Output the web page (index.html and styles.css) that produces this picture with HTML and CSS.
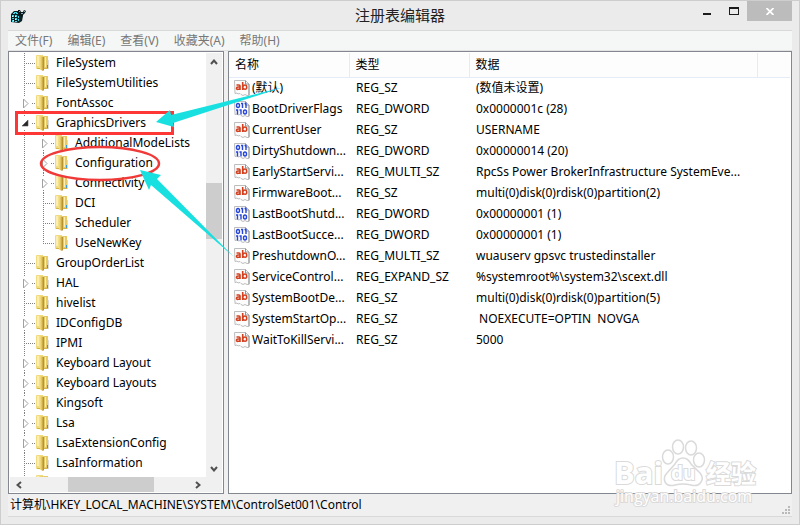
FILE: index.html
```html
<!DOCTYPE html>
<html lang="zh-CN">
<head>
<meta charset="utf-8">
<title>注册表编辑器</title>
<link rel="stylesheet" href="styles.css">
</head>
<body>
<svg class="defs" aria-hidden="true">
  <defs>
    <linearGradient id="gold" x1="0" x2="1" y1="0" y2="0">
      <stop offset="0" stop-color="#f6e48f"/><stop offset=".4" stop-color="#ecd373"/><stop offset=".9" stop-color="#b8922e"/><stop offset="1" stop-color="#ecd27a"/>
    </linearGradient>
    <symbol id="folder" viewBox="0 0 14 16">
      <path d="M0 1q0-1 1-1h6v14H1q-1 0-1-1z" fill="#f1db80"/>
      <path d="M7 2q0-1 1-1h4v13H7z" fill="#e6ca68"/>
      <path d="M3 1l5 1v13l-1 1-4-2z" fill="url(#gold)"/>
      <path d="M1 1h2v10H1zM9 2h1v10H9z" fill="#fbeeb0"/>
      <path d="M1 13h3v1H1zM8 13h4v1H8z" fill="#d7b548"/>
      <path d="M12 5h1v9h-1z" fill="#d9dcda"/>
      <path d="M11 10h1v3h-1z" fill="#3997dc"/>
    </symbol>
    <symbol id="leaf" viewBox="0 0 19 20">
      <path d="M7.500 0V20M9 10.500H19" class="dots"/>
    </symbol>
    <symbol id="last" viewBox="0 0 19 20">
      <path d="M7.500 0V10M7 10.500H19" class="dots"/>
    </symbol>
    <symbol id="closed" viewBox="0 0 19 20">
      <path d="M7.500 0V3M7.500 17V20M15 10.500H19" class="dots"/>
      <path d="M6.500 6v9l4.500-4.500z" fill="#fff" stroke="#a0a0a0"/>
    </symbol>
    <symbol id="open" viewBox="0 0 19 20">
      <path d="M7.500 0V3M7.500 17V20M15 10.500H19" class="dots"/>
      <path d="M11 7v6H5z" fill="#262626" stroke="#555" stroke-width=".6"/>
    </symbol>
    <symbol id="page" viewBox="0 0 16 16">
      <path d="M.5 .5h11l3.500 3.500v11.500h-2l-2-1-2 1-2-1-1-1-2 .5-1-1-2 .5z" fill="#fcfcfc" stroke="#bdbdbd"/>
      <path d="M11.500 .5v3.500H15v11" fill="none" stroke="#959595"/>
    </symbol>
    <symbol id="str" viewBox="0 0 16 16">
      <use href="#page" width="16" height="16"/>
      <g fill="none" stroke="#d2401f" stroke-width="1.600"><path d="M2.500 5h2.500q1 0 1 1v4M6 7H4Q2.500 7 2.500 8.300T4 9.300q2 0 2-1.300M8.700 2v8M9 6.500q.5-1.500 2-1.500 1.700 0 1.700 2.200T11 9.300q-1.500 0-2-1.300"/></g>
    </symbol>
    <symbol id="bin" viewBox="0 0 16 16">
      <use href="#page" width="16" height="16"/>
      <g fill="none" stroke="#2546d8" stroke-width="1.400"><ellipse cx="4" cy="4.500" rx="1.500" ry="2"/><path d="M7 2.500h1.500v4.500M10.500 2.500H12v4.500M2 9h1.500v4.500M5.500 9H7v4.500"/><ellipse cx="11" cy="11" rx="1.500" ry="2"/></g>
    </symbol>
  </defs>
</svg>

<div class="window">
  <header class="titlebar">
    <svg class="appicon" viewBox="0 0 16 16" aria-hidden="true">
      <path d="M1 6l3-3h4v2h5v3l-1 5-3 2-8-1V6z" fill="#0b2024"/>
      <path d="M2 7h2v2H2zM5 7h2v2H5zM8 8h1v2H8zM2 10h2v1H2zM5 10h2v2H5zM8 11h1v2H8zM2 12h2v2H2zM5 13h2v1H5zM4 4h3v1H4zM3 5h2v1H3zM6 5h2v1H6z" fill="#45d3e2"/>
      <path d="M2 8h1v1H2zM5 11h1v1H5zM5 8h1v1H5zM3 12h1v1H3z" fill="#d7ffff"/>
      <path d="M8 2l2 0 1 2 2 0 1-2 2 1-1 2-2 2-2 2-1-2-2-1z" fill="#0a1618"/>
      <path d="M9 3h1v1H9zM14 3h1v1h-1zM11 5h2v1h-2z" fill="#7ba9ae"/>
    </svg>
    <h1>注册表编辑器</h1>
    <div class="controls">
      <button aria-label="最小化"><svg width="8" height="2"><path d="M0 0h8v2H0z" fill="#1c1c1c"/></svg></button>
      <button aria-label="最大化"><svg width="10" height="8"><path d="M0 0h10v8H0zM1 2v5h8V2z" fill="#1c1c1c" fill-rule="evenodd"/></svg></button>
      <button class="close" aria-label="关闭"><svg width="8" height="7"><path d="M.5 0l7 7M7.500 0l-7 7" stroke="#fff" stroke-width="1.700"/></svg></button>
    </div>
  </header>

  <div class="client">
    <nav class="menubar">
      <button>文件(F)</button><button>编辑(E)</button><button>查看(V)</button><button>收藏夹(A)</button><button>帮助(H)</button>
    </nav>

    <main class="panes">
      <section class="tree" aria-label="注册表项">
        <div class="treeview">
          <ul>
            <li><div class="node"><svg class="gutter"><use href="#leaf"/></svg><svg class="folder"><use href="#folder"/></svg><span>FileSystem</span></div></li>
            <li><div class="node"><svg class="gutter"><use href="#leaf"/></svg><svg class="folder"><use href="#folder"/></svg><span>FileSystemUtilities</span></div></li>
            <li><div class="node"><button aria-label="展开"><svg class="gutter"><use href="#closed"/></svg></button><svg class="folder"><use href="#folder"/></svg><span>FontAssoc</span></div></li>
            <li><div class="node"><button aria-label="折叠"><svg class="gutter"><use href="#open"/></svg></button><svg class="folder"><use href="#folder"/></svg><span>GraphicsDrivers</span></div>
              <ul class="children">
                <li><div class="node"><button aria-label="展开"><svg class="gutter"><use href="#closed"/></svg></button><svg class="folder"><use href="#folder"/></svg><span>AdditionalModeLists</span></div></li>
                <li><div class="node"><button aria-label="展开"><svg class="gutter"><use href="#closed"/></svg></button><svg class="folder"><use href="#folder"/></svg><span>Configuration</span></div></li>
                <li><div class="node"><button aria-label="展开"><svg class="gutter"><use href="#closed"/></svg></button><svg class="folder"><use href="#folder"/></svg><span>Connectivity</span></div></li>
                <li><div class="node"><svg class="gutter"><use href="#leaf"/></svg><svg class="folder"><use href="#folder"/></svg><span>DCI</span></div></li>
                <li><div class="node"><svg class="gutter"><use href="#leaf"/></svg><svg class="folder"><use href="#folder"/></svg><span>Scheduler</span></div></li>
                <li><div class="node"><svg class="gutter"><use href="#last"/></svg><svg class="folder"><use href="#folder"/></svg><span>UseNewKey</span></div></li>
              </ul>
            </li>
            <li><div class="node"><svg class="gutter"><use href="#leaf"/></svg><svg class="folder"><use href="#folder"/></svg><span>GroupOrderList</span></div></li>
            <li><div class="node"><button aria-label="展开"><svg class="gutter"><use href="#closed"/></svg></button><svg class="folder"><use href="#folder"/></svg><span>HAL</span></div></li>
            <li><div class="node"><svg class="gutter"><use href="#leaf"/></svg><svg class="folder"><use href="#folder"/></svg><span>hivelist</span></div></li>
            <li><div class="node"><button aria-label="展开"><svg class="gutter"><use href="#closed"/></svg></button><svg class="folder"><use href="#folder"/></svg><span>IDConfigDB</span></div></li>
            <li><div class="node"><svg class="gutter"><use href="#leaf"/></svg><svg class="folder"><use href="#folder"/></svg><span>IPMI</span></div></li>
            <li><div class="node"><button aria-label="展开"><svg class="gutter"><use href="#closed"/></svg></button><svg class="folder"><use href="#folder"/></svg><span>Keyboard Layout</span></div></li>
            <li><div class="node"><button aria-label="展开"><svg class="gutter"><use href="#closed"/></svg></button><svg class="folder"><use href="#folder"/></svg><span>Keyboard Layouts</span></div></li>
            <li><div class="node"><button aria-label="展开"><svg class="gutter"><use href="#closed"/></svg></button><svg class="folder"><use href="#folder"/></svg><span>Kingsoft</span></div></li>
            <li><div class="node"><button aria-label="展开"><svg class="gutter"><use href="#closed"/></svg></button><svg class="folder"><use href="#folder"/></svg><span>Lsa</span></div></li>
            <li><div class="node"><button aria-label="展开"><svg class="gutter"><use href="#closed"/></svg></button><svg class="folder"><use href="#folder"/></svg><span>LsaExtensionConfig</span></div></li>
            <li><div class="node"><svg class="gutter"><use href="#leaf"/></svg><svg class="folder"><use href="#folder"/></svg><span>LsaInformation</span></div></li>
            <li><div class="node"><svg class="gutter"><use href="#leaf"/></svg><svg class="folder"><use href="#folder"/></svg></div></li>
          </ul>
        </div>
        <div class="vscroll">
          <button aria-label="向上滚动"><svg width="8" height="6"><path d="M1 5l3-3.500L7 5" class="chev"/></svg></button>
          <div class="track"><div class="thumb"></div></div>
          <button aria-label="向下滚动"><svg width="8" height="6"><path d="M1 1l3 3.500L7 1" class="chev"/></svg></button>
        </div>
        <div class="hscroll">
          <button aria-label="向左滚动"><svg width="6" height="8"><path d="M5 1L1.500 4 5 7" class="chev"/></svg></button>
          <div class="track"><div class="thumb"></div></div>
          <button aria-label="向右滚动"><svg width="6" height="8"><path d="M1 1l3.500 3L1 7" class="chev"/></svg></button>
        </div>
      </section>

      <section class="list" aria-label="值">
        <table>
          <colgroup><col class="c-name"><col class="c-type"><col class="c-data"><col></colgroup>
          <thead><tr><th>名称</th><th>类型</th><th>数据</th><th></th></tr></thead>
          <tbody>
            <tr><td><svg class="val"><use href="#str"/></svg>(默认)</td><td>REG_SZ</td><td>(数值未设置)</td><td></td></tr>
            <tr><td><svg class="val"><use href="#bin"/></svg>BootDriverFlags</td><td>REG_DWORD</td><td>0x0000001c (28)</td><td></td></tr>
            <tr><td><svg class="val"><use href="#str"/></svg>CurrentUser</td><td>REG_SZ</td><td>USERNAME</td><td></td></tr>
            <tr><td><svg class="val"><use href="#bin"/></svg>DirtyShutdown...</td><td>REG_DWORD</td><td>0x00000014 (20)</td><td></td></tr>
            <tr><td><svg class="val"><use href="#str"/></svg>EarlyStartServi...</td><td>REG_MULTI_SZ</td><td>RpcSs Power BrokerInfrastructure SystemEve...</td><td></td></tr>
            <tr><td><svg class="val"><use href="#str"/></svg>FirmwareBoot...</td><td>REG_SZ</td><td>multi(0)disk(0)rdisk(0)partition(2)</td><td></td></tr>
            <tr><td><svg class="val"><use href="#bin"/></svg>LastBootShutd...</td><td>REG_DWORD</td><td>0x00000001 (1)</td><td></td></tr>
            <tr><td><svg class="val"><use href="#bin"/></svg>LastBootSucce...</td><td>REG_DWORD</td><td>0x00000001 (1)</td><td></td></tr>
            <tr><td><svg class="val"><use href="#str"/></svg>PreshutdownO...</td><td>REG_MULTI_SZ</td><td>wuauserv gpsvc trustedinstaller</td><td></td></tr>
            <tr><td><svg class="val"><use href="#str"/></svg>ServiceControl...</td><td>REG_EXPAND_SZ</td><td>%systemroot%\system32\scext.dll</td><td></td></tr>
            <tr><td><svg class="val"><use href="#str"/></svg>SystemBootDe...</td><td>REG_SZ</td><td>multi(0)disk(0)rdisk(0)partition(5)</td><td></td></tr>
            <tr><td><svg class="val"><use href="#str"/></svg>SystemStartOp...</td><td>REG_SZ</td><td> NOEXECUTE=OPTIN  NOVGA</td><td></td></tr>
            <tr><td><svg class="val"><use href="#str"/></svg>WaitToKillServi...</td><td>REG_SZ</td><td>5000</td><td></td></tr>
          </tbody>
        </table>
      </section>
    </main>

    <footer class="status">
      <span>计算机\HKEY_LOCAL_MACHINE\SYSTEM\ControlSet001\Control</span>
      <svg class="grip" width="8" height="8" aria-hidden="true"><path d="M6 0h2v2H6zM3 3h2v2H3zM6 3h2v2H6zM0 6h2v2H0zM3 6h2v2H3zM6 6h2v2H6z" fill="#b9b9b9"/></svg>
    </footer>
  </div>

  <svg class="marks" width="290" height="270" aria-hidden="true">
    <path d="M16.500 112.500H172.500V133.500H16.500z" fill="none" stroke="#ff3636" stroke-width="3"/>
    <ellipse cx="100" cy="163.500" rx="59" ry="16.500" fill="none" stroke="#f03a3a" stroke-width="2.500"/>
    <path d="M156 122l14-12 1 5 113-28-111 36 1 4z" fill="#19e0e0"/>
    <path d="M140 170l21 5-4 4 77 78-83-72-2 5z" fill="#19e0e0"/>
  </svg>

  <svg class="watermark" width="152" height="72" viewBox="0 0 152 72" aria-hidden="true">
    <g fill="#fff" stroke="#dadada" stroke-width="1.500">
      <ellipse cx="55" cy="20" rx="5.500" ry="7"/><ellipse cx="65" cy="10" rx="5.500" ry="7"/><ellipse cx="78" cy="11" rx="5.500" ry="7"/><ellipse cx="86" cy="23" rx="5.500" ry="7"/>
      <path d="M70 21q5 0 8 6l9 9q4 5 1 9-3 5-10 3-8-2-16 0-7 2-10-3-2-5 2-9l8-9q3-6 8-6z"/>
    </g>
    <g class="wm-text">
      <text x="1" y="47" class="wm-bai">Bai</text>
      <text x="58" y="43" class="wm-du">du</text>
      <text x="93" y="46" class="wm-cn">经验</text>
      <text x="3" y="65" class="wm-url">jingyan.baidu.com</text>
    </g>
  </svg>
</div>
</body>
</html>
```
FILE: styles.css
```css
* { box-sizing: border-box; }
html, body { height: 100%; margin: 0; }
body {
  font: 12px/20px "Noto Sans", "Noto Sans CJK SC", sans-serif;
  color: #000;
  overflow: hidden;
}
button { border: 0; padding: 0; margin: 0; background: none; font: inherit; color: inherit; }
svg { display: block; flex: none; }
ul { list-style: none; margin: 0; padding: 0; }
.defs { position: absolute; width: 0; height: 0; }
.dots { fill: none; stroke: #808080; stroke-dasharray: 1 1; }
.chev { fill: none; stroke: #505050; stroke-width: 2; }

.window {
  position: relative;
  display: flex;
  flex-direction: column;
  height: 100%;
  background: #ebebeb;
  border: 1px solid #cdcdcd;
  padding: 0 7px 7px;
}
.titlebar {
  display: grid;
  grid-template-columns: 1fr auto 1fr;
  height: 29px;
  flex: none;
}
.appicon { width: 16px; height: 16px; margin: 7px 2px; }
.titlebar h1 { margin: 0; font-size: 15px; line-height: 28px; font-weight: 400; color: #222; }
.controls { display: flex; justify-content: flex-end; align-items: flex-start; }
.controls button { width: 27px; height: 20px; display: flex; align-items: center; justify-content: center; }
.controls .close { width: 45px; background: #bcbcbc; }
.controls button:first-child { align-items: flex-end; padding-bottom: 6px; }

.client { flex: 1; min-height: 0; display: flex; flex-direction: column; border-top: 1px solid #d9d9d9; }
.menubar {
  display: flex;
  gap: 15px;
  height: 20px;
  flex: none;
  padding-left: 7px;
  background: #f5f7f6;
  border-bottom: 1px solid #e2e2e2;
  color: #777;
}

.panes { flex: 1; min-height: 0; display: flex; gap: 4px; background: #f0f0f0; }
.tree {
  width: 216px;
  flex: none;
  display: grid;
  grid-template: minmax(0, 1fr) 15px / minmax(0, 1fr) 16px;
  border: 1px solid #828790;
  padding: 1px;
  background: #fff;
}
.treeview { overflow: hidden; padding-left: 7px; }
.node { display: flex; align-items: center; height: 20px; white-space: nowrap; }
.gutter { width: 19px; height: 20px; }
.folder { width: 14px; height: 16px; margin-right: 6px; }
.children { padding-left: 19px; background: linear-gradient(#808080 50%, transparent 50%) 7px 0 / 1px 2px repeat-y; }

.vscroll, .hscroll { display: flex; background: #f0f0f0; }
.vscroll { flex-direction: column; }
.vscroll button, .hscroll button { display: flex; align-items: center; justify-content: center; }
.vscroll button { height: 17px; }
.hscroll { grid-column: 1 / -1; padding-right: 16px; }
.hscroll button { width: 17px; }
.track { flex: 1; display: flex; }
.vscroll .track { flex-direction: column; padding-top: 113px; }
.vscroll .thumb { height: 56px; background: #cdcdcd; }
.hscroll .track { padding-left: 41px; }
.hscroll .thumb { width: 86px; background: #cdcdcd; }

.list { flex: 1; min-width: 0; border: 1px solid #828790; padding: 1px 1px 1px 0; background: #fff; overflow: hidden; }
table { width: 100%; table-layout: fixed; border-collapse: collapse; }
.c-name, .c-type { width: 120px; }
.c-data { width: 288px; }
th { height: 24px; padding: 0 6px; text-align: left; font-weight: 400; background: #fdfdfd; border: 1px solid #e3ecf8; border-width: 0 1px 1px 0; }
th:last-child { border-right: 0; }
td { height: 21px; padding: 0 7px; white-space: pre; overflow: hidden; }
td:first-child { display: flex; align-items: center; padding: 0 0 0 5px; }
.val { width: 16px; height: 16px; margin-right: 2px; }

.status { display: flex; justify-content: space-between; align-items: center; height: 23px; flex: none; padding: 0 2px; background: #f0f0f0; border-bottom: 1px solid #d9d9d9; }
.grip { align-self: flex-end; margin-bottom: 2px; }

.marks { position: absolute; left: -1px; top: -1px; }
.watermark { position: absolute; right: 34px; bottom: 15px; }
.wm-text { fill: #fff; stroke: #dadada; stroke-width: 2px; paint-order: stroke; font-family: "Open Sans", "Noto Sans CJK SC", sans-serif; font-weight: 700; }
.wm-bai { font-size: 31px; }
.wm-du { font-size: 19px; }
.wm-cn { font-size: 25px; }
.wm-url { font-size: 16px; font-weight: 400; }
```
